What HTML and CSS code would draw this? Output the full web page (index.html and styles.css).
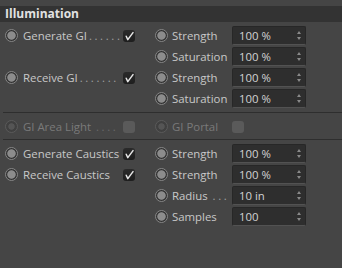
FILE: index.html
```html
<!DOCTYPE html>
<html lang="en">
<head>
    <meta charset="UTF-8">
    <title>Illumination</title>
    <link rel="stylesheet" href="styles.css">
</head>
<body>

<div class="panel">
    <div class="title">Illumination</div>

    <!-- GI -->
    <div class="group">
        <div class="col-left">
            <div class="row">
                <span class="radio"></span>
                <span class="label">Generate GI<span class="dots">......</span></span>
                <span class="check on"><svg width="12" height="12" viewBox="0 0 12 12"><path d="M3.2 6.2 L4.8 9.6 L10 2.6" /></svg></span>
            </div>
            <div class="row"></div>
            <div class="row">
                <span class="radio"></span>
                <span class="label">Receive GI<span class="dots">.......</span></span>
                <span class="check on"><svg width="12" height="12" viewBox="0 0 12 12"><path d="M3.2 6.2 L4.8 9.6 L10 2.6" /></svg></span>
            </div>
            <div class="row"></div>
        </div>
        <div class="col-right">
            <div class="row">
                <span class="radio"></span>
                <span class="name">Strength</span>
                <span class="field">100 %<span class="spin"></span></span>
            </div>
            <div class="row">
                <span class="radio"></span>
                <span class="name">Saturation</span>
                <span class="field">100 %<span class="spin"></span></span>
            </div>
            <div class="row">
                <span class="radio"></span>
                <span class="name">Strength</span>
                <span class="field">100 %<span class="spin"></span></span>
            </div>
            <div class="row">
                <span class="radio"></span>
                <span class="name">Saturation</span>
                <span class="field">100 %<span class="spin"></span></span>
            </div>
        </div>
    </div>

    <div class="sep"></div>

    <!-- Area light / portal (disabled) -->
    <div class="group disabled">
        <div class="col-left">
            <div class="row">
                <span class="radio"></span>
                <span class="label">GI Area Light <span class="dots">....</span></span>
                <span class="check"></span>
            </div>
        </div>
        <div class="col-right">
            <div class="row">
                <span class="radio"></span>
                <span class="name">GI Portal</span>
                <span class="check"></span>
            </div>
        </div>
    </div>

    <div class="sep"></div>

    <!-- Caustics -->
    <div class="group">
        <div class="col-left">
            <div class="row">
                <span class="radio"></span>
                <span class="label">Generate Caustics</span>
                <span class="check on"><svg width="12" height="12" viewBox="0 0 12 12"><path d="M3.2 6.2 L4.8 9.6 L10 2.6" /></svg></span>
            </div>
            <div class="row">
                <span class="radio"></span>
                <span class="label">Receive Caustics</span>
                <span class="check on"><svg width="12" height="12" viewBox="0 0 12 12"><path d="M3.2 6.2 L4.8 9.6 L10 2.6" /></svg></span>
            </div>
        </div>
        <div class="col-right">
            <div class="row">
                <span class="radio"></span>
                <span class="name">Strength</span>
                <span class="field">100 %<span class="spin"></span></span>
            </div>
            <div class="row">
                <span class="radio"></span>
                <span class="name">Strength</span>
                <span class="field">100 %<span class="spin"></span></span>
            </div>
            <div class="row">
                <span class="radio"></span>
                <span class="name">Radius <span class="dots">...</span></span>
                <span class="field">10 in<span class="spin"></span></span>
            </div>
            <div class="row">
                <span class="radio"></span>
                <span class="name">Samples</span>
                <span class="field">100<span class="spin"></span></span>
            </div>
        </div>
    </div>
</div>

</body>
</html>
```

FILE: styles.css
```css
/* Page */
body {
    margin: 0;
    background: #454545;
    font-family: "Open Sans", "DejaVu Sans", sans-serif;
    font-size: 11.4px;
    color: #c8c8c8;
}

.panel {
    padding-top: 6px;
}

/* Section header */
.title {
    height: 16px;
    line-height: 16px;
    background: #333333;
    padding-left: 5px;
    font-size: 12px;
    font-weight: bold;
    color: #e2e2e2;
    margin-bottom: 3px;
}

/* Two column groups */
.group {
    display: flex;
}

.col-left {
    width: 155px;
    padding-left: 5px;
    box-sizing: border-box;
}

.row {
    height: 21px;
    display: flex;
    align-items: center;
}

/* Radio (animation) toggles */
.radio {
    width: 13px;
    height: 13px;
    border-radius: 50%;
    box-sizing: border-box;
    border: 1px solid #858585;
    background: radial-gradient(circle, #8c8c8c 0, #8c8c8c 3.8px, #333333 4.6px);
    flex: none;
}

.col-left .radio {
    margin-right: 5px;
}

.col-right .radio {
    margin-right: 4px;
}

.label {
    width: 100px;
    white-space: nowrap;
}

.name {
    width: 60px;
    white-space: nowrap;
}

.dots {
    letter-spacing: 2.6px;
    color: #a0a0a0;
    margin-left: 2px;
}

/* Checkboxes */
.check {
    width: 12px;
    height: 12px;
    border-radius: 3px;
    background: #5a5a5a;
    flex: none;
    display: flex;
}

.check.on {
    background: linear-gradient(#2a2a2a, #1e1e1e);
}

.check svg path {
    fill: none;
    stroke: #e6e6e6;
    stroke-width: 1.5;
    stroke-linecap: round;
    stroke-linejoin: round;
}

/* Numeric fields */
.field {
    width: 74px;
    height: 19px;
    box-sizing: border-box;
    background: #2e2e2e;
    border: 1px solid #272727;
    border-bottom-color: #525252;
    border-radius: 2px;
    padding-left: 6px;
    display: flex;
    align-items: center;
    color: #d2d2d2;
    position: relative;
}

.spin {
    position: absolute;
    right: 4px;
    top: 4px;
    width: 0;
    height: 9px;
    border-left: 2.5px solid transparent;
    border-right: 2.5px solid transparent;
}

.spin::before,
.spin::after {
    content: "";
    position: absolute;
    left: -2.5px;
    border-left: 2.5px solid transparent;
    border-right: 2.5px solid transparent;
}

.spin::before {
    top: 0;
    border-bottom: 3.5px solid #8a8a8a;
}

.spin::after {
    bottom: 0;
    border-top: 3.5px solid #8a8a8a;
}

/* Separators */
.sep {
    height: 1px;
    background: #2e2e2e;
    margin: 3px 0 3px 3px;
}

.sep + .disabled + .sep {
    margin-top: 2px;
}

/* Disabled group */
.disabled {
    color: #7a7a7a;
}

.disabled .dots {
    color: #6a6a6a;
}

.disabled .radio {
    border-color: #5a5a5a;
    background: radial-gradient(circle, #555 0, #555 2.8px, #404040 3.6px);
}
```
